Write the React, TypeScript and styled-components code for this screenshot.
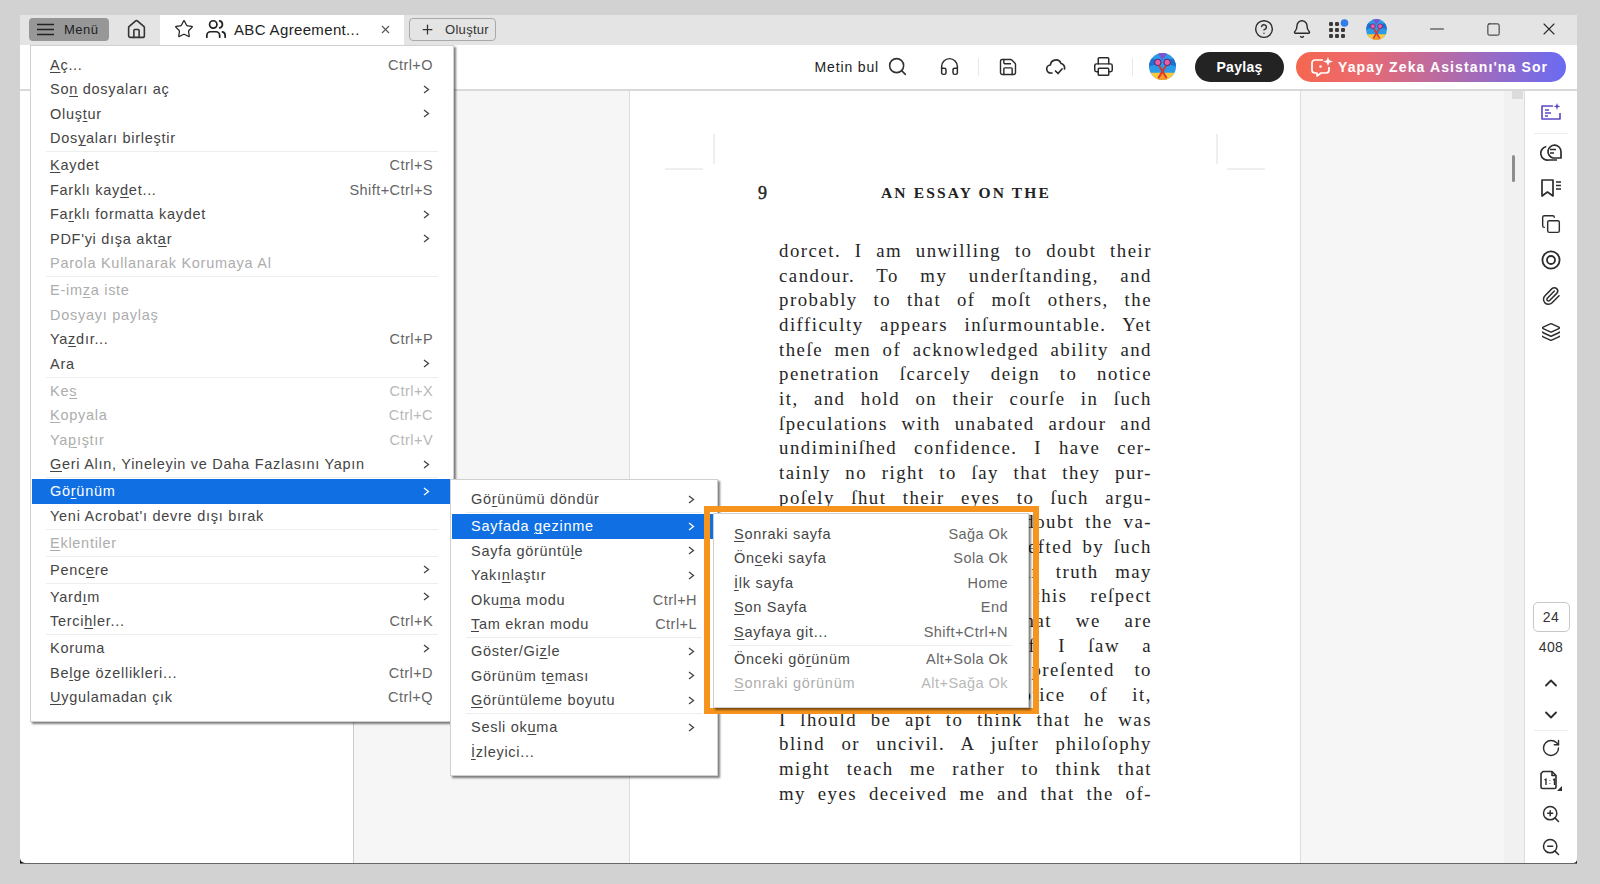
import React from "react";
import styled, { createGlobalStyle } from "styled-components";
import {
    Bell, ChevronDown, ChevronUp, CircleHelp, Copy, Headphones, House, Layers, Minus, Paperclip,
    Plus, Printer, RotateCw, Save, Search, Square, Star, Users, X, ZoomIn, ZoomOut,
} from "lucide-react";

const GlobalStyle = createGlobalStyle`
    html, body {
        margin: 0;
        padding: 0;
        height: 100%;
        background: #d2d2d2;
        overflow: hidden;
    }
    #root {
        height: 100%;
    }
`;

type MenuEntry = {
    label?: string,
    u?: number,
    hint?: string,
    sub?: boolean,
    off?: boolean,
    active?: boolean,
    separator?: boolean,
};

const SEP: MenuEntry = { separator: true };

const mainMenu: MenuEntry[] = [
    { label: "Aç...", u: 0, hint: "Ctrl+O" },
    { label: "Son dosyaları aç", u: 2, sub: true },
    { label: "Oluştur", u: 4, sub: true },
    { label: "Dosyaları birleştir", u: 3 },
    SEP,
    { label: "Kaydet", u: 0, hint: "Ctrl+S" },
    { label: "Farklı kaydet...", u: 10, hint: "Shift+Ctrl+S" },
    { label: "Farklı formatta kaydet", u: 2, sub: true },
    { label: "PDF'yi dışa aktar", u: 15, sub: true },
    { label: "Parola Kullanarak Korumaya Al", off: true },
    SEP,
    { label: "E-imza iste", u: 4, off: true },
    { label: "Dosyayı paylaş", off: true },
    { label: "Yazdır...", u: 2, hint: "Ctrl+P" },
    { label: "Ara", sub: true },
    SEP,
    { label: "Kes", u: 2, hint: "Ctrl+X", off: true },
    { label: "Kopyala", u: 0, hint: "Ctrl+C", off: true },
    { label: "Yapıştır", u: 2, hint: "Ctrl+V", off: true },
    { label: "Geri Alın, Yineleyin ve Daha Fazlasını Yapın", u: 0, sub: true },
    SEP,
    { label: "Görünüm", u: 2, sub: true, active: true },
    { label: "Yeni Acrobat'ı devre dışı bırak" },
    SEP,
    { label: "Eklentiler", u: 0, off: true },
    SEP,
    { label: "Pencere", u: 4, sub: true },
    SEP,
    { label: "Yardım", u: 4, sub: true },
    { label: "Tercihler...", u: 5, hint: "Ctrl+K" },
    SEP,
    { label: "Koruma", sub: true },
    { label: "Belge özellikleri...", u: 2, hint: "Ctrl+D" },
    { label: "Uygulamadan çık", u: 0, hint: "Ctrl+Q" },
];

const viewMenu: MenuEntry[] = [
    { label: "Görünümü döndür", u: 2, sub: true },
    SEP,
    { label: "Sayfada gezinme", u: 8, sub: true, active: true },
    { label: "Sayfa görüntüle", u: 13, sub: true },
    { label: "Yakınlaştır", u: 4, sub: true },
    { label: "Okuma modu", u: 3, hint: "Ctrl+H" },
    { label: "Tam ekran modu", u: 0, hint: "Ctrl+L" },
    SEP,
    { label: "Göster/Gizle", u: 9, sub: true },
    { label: "Görünüm teması", u: 9, sub: true },
    { label: "Görüntüleme boyutu", u: 0, sub: true },
    SEP,
    { label: "Sesli okuma", u: 8, sub: true },
    { label: "İzleyici...", u: 0 },
];

const navMenu: MenuEntry[] = [
    { label: "Sonraki sayfa", u: 0, hint: "Sağa Ok" },
    { label: "Önceki sayfa", u: 2, hint: "Sola Ok" },
    { label: "İlk sayfa", u: 0, hint: "Home" },
    { label: "Son Sayfa", u: 0, hint: "End" },
    { label: "Sayfaya git...", u: 0, hint: "Shift+Ctrl+N" },
    SEP,
    { label: "Önceki görünüm", u: 9, hint: "Alt+Sola Ok" },
    { label: "Sonraki görünüm", u: 0, hint: "Alt+Sağa Ok", off: true },
];

const bookLines = [
    "dorcet. I am unwilling to doubt their",
    "candour. To my underſtanding, and",
    "probably to that of moſt others, the",
    "difficulty appears inſurmountable. Yet",
    "theſe men of acknowledged ability and",
    "penetration ſcarcely deign to notice",
    "it, and hold on their courſe in ſuch",
    "ſpeculations with unabated ardour and",
    "undiminiſhed confidence. I have cer-",
    "tainly no right to ſay that they pur-",
    "poſely ſhut their eyes to ſuch argu-",
    "ments. I do not mean to doubt the va-",
    "lidity of thoſe who are affefted by ſuch",
    "reaſons, for I know their truth may",
    "appear different under this reſpect",
    "to us, and I own that we are",
    "often in the wrong. If I ſaw a",
    "man to whom it was preſented to",
    "view and took no notice of it,",
    "I ſhould be apt to think that he was",
    "blind or uncivil. A juſter philoſophy",
    "might teach me rather to think that",
    "my eyes deceived me and that the of-",
];

const Window = styled.div`
    position: absolute;
    left: 20px;
    top: 15px;
    width: 1557px;
    height: 849px;
    display: flex;
    flex-direction: column;
    font-family: "Liberation Sans", Arial, sans-serif;
    color: #333;
`;

const TabBar = styled.div`
    height: 30px;
    flex: none;
    display: flex;
    align-items: center;
    background: #e4e4e4;
    padding-left: 9px;
`;

const MenuButton = styled.div`
    width: 80px;
    height: 23px;
    margin-bottom: 2px;
    box-sizing: border-box;
    padding-left: 8px;
    display: flex;
    align-items: center;
    gap: 10px;
    background: #979797;
    border-radius: 4px;
    font-size: 13px;
    letter-spacing: 0.5px;
    color: #222;
`;

const HomeSlot = styled.div`
    width: 51px;
    height: 28px;
    margin-bottom: 2px;
    box-sizing: border-box;
    padding-left: 4px;
    display: flex;
    align-items: center;
    justify-content: center;
    color: #333;
`;

const Tab = styled.div`
    width: 244px;
    height: 30px;
    box-sizing: border-box;
    padding: 0 0 2px 14px;
    display: flex;
    align-items: center;
    background: #fff;
    font-size: 15px;
    letter-spacing: 0.35px;
    color: #222;
`;

const TabTitle = styled.span`
    margin-left: 7px;
    width: 145px;
    white-space: nowrap;
`;

const TabIcon = styled.span`
    display: flex;
    margin-left: 11px;
`;

const CreateButton = styled.div`
    margin: 0 0 2px 5px;
    width: 87px;
    height: 23px;
    box-sizing: border-box;
    padding-left: 10px;
    display: flex;
    align-items: center;
    gap: 10px;
    border: 1px solid #a9a9a9;
    border-radius: 4px;
    font-size: 13px;
    letter-spacing: 0.3px;
    color: #333;
`;

const WindowTools = styled.div`
    margin: 0 0 2px auto;
    display: flex;
    align-items: center;
`;

const ToolSlot = styled.div<{ $w: number, $ml?: number }>`
    width: ${p => p.$w}px;
    margin-left: ${p => p.$ml ?? 0}px;
    display: flex;
    align-items: center;
    justify-content: center;
    color: #2b2b2b;
`;

const Toolbar = styled.div`
    height: 43px;
    flex: none;
    display: flex;
    align-items: center;
    justify-content: flex-end;
    padding: 0 11px 1px 0;
    background: #fff;
    border-bottom: 2px solid #d9d9d9;
    box-sizing: content-box;
`;

const FindLabel = styled.span`
    font-size: 14px;
    color: #222;
    letter-spacing: 0.85px;
    margin-right: 8px;
`;

const BarDivider = styled.div`
    width: 1px;
    height: 18px;
    background: #e8e8e8;
`;

const ShareButton = styled.div`
    width: 89px;
    height: 30px;
    margin-left: 9px;
    display: flex;
    align-items: center;
    justify-content: center;
    border-radius: 16px;
    background: #232323;
    color: #fff;
    font-size: 14px;
    font-weight: 700;
    letter-spacing: 0.3px;
`;

const AskButton = styled.div`
    width: 270px;
    height: 30px;
    margin-left: 12px;
    box-sizing: border-box;
    padding-left: 14px;
    display: flex;
    align-items: center;
    gap: 4px;
    border-radius: 16px;
    background: linear-gradient(90deg, #f5674f 0%, #ea6a70 25%, #a56bb8 65%, #6a6bf2 100%);
    color: #fff;
    font-size: 14px;
    font-weight: 700;
    letter-spacing: 1.12px;
    white-space: nowrap;
`;

const Body = styled.div`
    flex: 1;
    min-height: 0;
    display: flex;
    background: #111;
    border-bottom: 1px solid #666;
`;

const LeftPanel = styled.div`
    width: 334px;
    flex: none;
    background: #fff;
    border-right: 1px solid #ccc;
    box-sizing: border-box;
    border-bottom-left-radius: 5px;
`;

const Workspace = styled.div`
    flex: 1;
    min-width: 0;
    background: #f6f6f6;
    padding-left: 275px;
    overflow: hidden;
`;

const Page = styled.div`
    position: relative;
    width: 672px;
    height: 100%;
    box-sizing: border-box;
    padding: 91px 148px 0 149px;
    background: #fff;
    border-left: 1px solid #ddd;
    border-right: 1px solid #ddd;
    font-family: "Liberation Serif", "Times New Roman", serif;
    color: #262626;
`;

const CropMarks = styled.svg`
    position: absolute;
    left: 0;
    top: 0;
    width: 670px;
    height: 90px;
`;

const PageHead = styled.div`
    position: relative;
    height: 22px;
    margin-left: -21px;
    display: flex;
    align-items: center;
    font-weight: 700;
    color: #222;
`;

const PageNumber = styled.span`
    font-size: 18px;
    font-weight: 400;
    -webkit-text-stroke: 0.4px #222;
    width: 123px;
`;

const PageTitle = styled.span`
    font-size: 15.5px;
    letter-spacing: 2.15px;
    white-space: nowrap;
`;

const PageText = styled.div`
    margin-top: 35px;
    font-size: 18.8px;
`;

const BookLine = styled.div`
    height: 24.68px;
    line-height: 24.68px;
    text-align: justify;
    text-align-last: justify;
    white-space: normal;
    letter-spacing: 1.5px;
    overflow: hidden;
`;

const ScrollStrip = styled.div`
    width: 21px;
    flex: none;
    background: #f1f1f1;
    border-right: 1px solid #dcdcdc;
    box-sizing: border-box;
    padding-left: 8px;
`;

const ScrollArrow = styled.div`
    height: 8px;
    margin-right: 1px;
    background: #dcdcdc;
`;

const ScrollThumb = styled.div`
    width: 3px;
    height: 27px;
    margin-top: 56px;
    background: #8d8d8d;
    border-radius: 2px;
`;

const Rail = styled.div`
    width: 52px;
    flex: none;
    display: flex;
    flex-direction: column;
    align-items: center;
    background: #fff;
    border-bottom-right-radius: 4px;
    color: #2d2d2d;
`;

const RailSlot = styled.div<{ $h?: number }>`
    width: 100%;
    height: ${p => p.$h ?? 36}px;
    flex: none;
    display: flex;
    align-items: center;
    justify-content: center;
`;

const RailRule = styled.div`
    width: 34px;
    height: 1px;
    flex: none;
    background: #eee;
`;

const PageBox = styled.div`
    margin-top: auto;
    width: 37px;
    height: 30px;
    flex: none;
    box-sizing: border-box;
    border: 1px solid #c8c8c8;
    border-radius: 5px;
    display: flex;
    align-items: center;
    justify-content: center;
    font-size: 14px;
    letter-spacing: 0.4px;
    color: #333;
`;

const PageTotal = styled.div`
    height: 30px;
    flex: none;
    margin-bottom: 5px;
    display: flex;
    align-items: center;
    font-size: 14px;
    letter-spacing: 0.4px;
    color: #333;
`;

const Popup = styled.div<{ $x: number, $y: number, $w: number, $pad: number, $bottom: number, $inset: number, $right: number, $arrow: number }>`
    position: absolute;
    left: ${p => p.$x}px;
    top: ${p => p.$y}px;
    width: ${p => p.$w}px;
    box-sizing: border-box;
    padding: ${p => p.$pad}px 1px ${p => p.$bottom}px;
    background: #fff;
    border: 1px solid #d0d0d0;
    box-shadow: 2px 2px 2px rgba(0, 0, 0, 0.5);
    font-family: "Liberation Sans", Arial, sans-serif;
    font-size: 14.5px;
    letter-spacing: 0.72px;
    --inset: ${p => p.$inset}px;
    --right: ${p => p.$right}px;
    --arrow: ${p => p.$arrow}px;
`;

const Row = styled.div<{ $off?: boolean, $active?: boolean }>`
    height: 24.5px;
    box-sizing: border-box;
    padding-left: var(--inset);
    padding-right: var(--right);
    display: flex;
    align-items: center;
    justify-content: space-between;
    white-space: nowrap;
    color: ${p => (p.$active ? "#fff" : p.$off ? "#adadad" : "#444")};
    background: ${p => (p.$active ? "#0f6fe3" : "transparent")};
    u {
        text-underline-offset: 2px;
        text-decoration-thickness: 1px;
    }
`;

const Hint = styled.span<{ $off?: boolean }>`
    color: ${p => (p.$off ? "#b8b8b8" : "#666")};
    letter-spacing: 0.45px;
`;

const Arrow = styled.svg`
    margin-right: var(--arrow);
    flex: none;
`;

const Rule = styled.div`
    height: 1px;
    margin: 0.75px 14px;
    background: #eee;
`;

const Highlight = styled.div`
    position: absolute;
    left: 704px;
    top: 506px;
    width: 335px;
    height: 208px;
    box-sizing: border-box;
    border: 6px solid #f7941d;
`;

function Label({ text, u }: { text: string, u?: number }) {
    if (u === undefined) return <span>{text}</span>;
    return (
        <span>
            {text.slice(0, u)}<u>{text[u]}</u>{text.slice(u + 1)}
        </span>
    );
}

function MenuList({ items }: { items: MenuEntry[] }) {
    return (
        <>
            {items.map((item, i) => {
                if (item.separator) return <Rule key={i} />;
                return (
                    <Row key={i} $off={item.off} $active={item.active}>
                        <Label text={item.label!} u={item.u} />
                        {item.hint && <Hint $off={item.off}>{item.hint}</Hint>}
                        {item.sub && (
                            <Arrow width="7" height="9" viewBox="0 0 7 9" fill="none" stroke="currentColor" strokeWidth="1.3">
                                <path d="M1 1l4.5 3.5L1 8" />
                            </Arrow>
                        )}
                    </Row>
                );
            })}
        </>
    );
}

function Avatar({ size }: { size: number }) {
    return (
        <svg width={size} height={size} viewBox="0 0 26 26">
            <defs>
                <clipPath id={`av${size}`}><circle cx="13" cy="13" r="13" /></clipPath>
            </defs>
            <g clipPath={`url(#av${size})`}>
                <rect width="26" height="26" fill="#2a9be8" />
                <path d="M13 9L0 4v9zM13 9l13-5v9z" fill="#1f6fd0" />
                <path d="M8 0h10l-5 7z" fill="#7a55d0" />
                <path d="M0 19h26v7H0z" fill="#f9c83c" />
                <path d="M7 26l6-8 6 8z" fill="#f29a2e" />
            </g>
            <circle cx="8.500" cy="9" r="3" fill="#ec5f9f" stroke="#5a2a80" strokeWidth="1" />
            <circle cx="17.500" cy="9" r="3" fill="#ec5f9f" stroke="#5a2a80" strokeWidth="1" />
            <path d="M9.500 12L17 24M16.500 12L9 24" stroke="#e0322c" strokeWidth="1.800" />
        </svg>
    );
}

function AppsIcon() {
    const dots = [];
    for (let row = 0; row < 3; row++) {
        for (let col = 0; col < 3; col++) {
            if (row === 0 && col === 2) continue;
            dots.push(<rect key={`${row}${col}`} x={col * 6} y={row * 6 + 3} width="4" height="4" rx="1.200" fill="#3a3a3a" />);
        }
    }
    return (
        <svg width="20" height="20" viewBox="0 0 20 20">
            {dots}
            <circle cx="15.500" cy="4" r="3.800" fill="#2f7de8" />
        </svg>
    );
}

function CloudIcon() {
    return (
        <svg width="22" height="20" viewBox="0 0 22 20" fill="none" stroke="#2b2b2b" strokeWidth="1.7" strokeLinecap="round" strokeLinejoin="round">
            <path d="M7 16H6a4 4 0 0 1-.6-8A5.500 5.500 0 0 1 16 6.500a4.500 4.500 0 0 1 3.500 5.500" />
            <path d="M10.500 14l2.500 2.500 4-4.500" />
        </svg>
    );
}

function AskIcon() {
    return (
        <svg width="24" height="22" viewBox="0 0 24 22" fill="none" stroke="#fff" strokeWidth="1.7" strokeLinejoin="round">
            <path d="M13 4H5a3 3 0 0 0-3 3v7a3 3 0 0 0 3 3h2v3l4-3h5a3 3 0 0 0 3-3v-3" />
            <circle cx="10.500" cy="10.500" r="1.200" fill="#fff" stroke="none" />
            <path d="M18 1l1.200 3.300L23 5.500l-3.600 1.300L18 10l-1.300-3.200L13 5.500l3.700-1.200z" fill="#fff" stroke="none" />
        </svg>
    );
}

function AgreementIcon() {
    return (
        <svg width="22" height="20" viewBox="0 0 22 20" fill="none" stroke="#5a48c8" strokeWidth="1.6" strokeLinejoin="round">
            <path d="M13 4H2v13h18v-6" />
            <path d="M5 8h4M5 11h6M5 14h3" />
            <path d="M17 1l.9 2.400 2.600.9-2.600 1L17 8l-.9-2.700-2.600-1 2.600-.9z" fill="#5a48c8" stroke="none" />
        </svg>
    );
}

function CommentsIcon() {
    return (
        <svg width="22" height="20" viewBox="0 0 22 20" fill="none" stroke="#2d2d2d" strokeWidth="1.7" strokeLinejoin="round">
            <path d="M21 16h-8a6.500 6.500 0 1 1 8-6.300z" />
            <path d="M10 7.500h6M10 11h4" />
            <path d="M6.300 4.500A6.500 6.500 0 0 0 9 18h8" />
        </svg>
    );
}

function BookmarksIcon() {
    return (
        <svg width="22" height="20" viewBox="0 0 22 20" fill="none" stroke="#2d2d2d" strokeWidth="1.7" strokeLinejoin="round">
            <path d="M2 2h11v16l-5.500-4L2 18z" />
            <path d="M16 4h5M16 7.500h5M16 11h5" strokeWidth="1.400" />
        </svg>
    );
}

function TargetIcon() {
    return (
        <svg width="20" height="20" viewBox="0 0 20 20" fill="none" stroke="#2d2d2d" strokeWidth="1.8">
            <circle cx="10" cy="10" r="8.600" />
            <circle cx="10" cy="10" r="4" />
        </svg>
    );
}

function ActualSizeIcon() {
    return (
        <svg width="24" height="22" viewBox="0 0 24 22" fill="none" stroke="#2d2d2d" strokeWidth="1.6" strokeLinejoin="round">
            <path d="M4 1.500h9l4 4V17a1.500 1.500 0 0 1-1.500 1.500h-12A1.500 1.500 0 0 1 2 17V3.500z" />
            <path d="M13 1.500v4h4" />
            <path d="M5.500 10l1.500-1v6M14 10l1.500-1v6M10.800 10.500v.6M10.800 13.500v.6" strokeWidth="1.400" />
            <path d="M23 16v5h-5z" fill="#2d2d2d" stroke="none" />
        </svg>
    );
}

export default function App() {
    return (
        <>
            <GlobalStyle />
            <Window>
                <TabBar>
                    <MenuButton>
                        <svg width="17" height="13" viewBox="0 0 17 13" stroke="#222" strokeWidth="1.6">
                            <path d="M0 1.500h17M0 6.500h17M0 11.500h17" />
                        </svg>
                        Menü
                    </MenuButton>
                    <HomeSlot><House size={21} strokeWidth={1.8} /></HomeSlot>
                    <Tab>
                        <Star size={20} strokeWidth={1.5} />
                        <TabIcon><Users size={22} strokeWidth={1.9} /></TabIcon>
                        <TabTitle>ABC Agreement...</TabTitle>
                        <X size={13} strokeWidth={2} color="#555" />
                    </Tab>
                    <CreateButton>
                        <Plus size={15} strokeWidth={2} />
                        Oluştur
                    </CreateButton>
                    <WindowTools>
                        <ToolSlot $w={38}><CircleHelp size={20} strokeWidth={1.7} /></ToolSlot>
                        <ToolSlot $w={37}><Bell size={20} strokeWidth={1.7} /></ToolSlot>
                        <ToolSlot $w={38}><AppsIcon /></ToolSlot>
                        <ToolSlot $w={37}><Avatar size={21} /></ToolSlot>
                        <ToolSlot $w={56} $ml={14}><Minus size={22} strokeWidth={1.3} /></ToolSlot>
                        <ToolSlot $w={56}><Square size={15} strokeWidth={1.6} /></ToolSlot>
                        <ToolSlot $w={56}><X size={20} strokeWidth={1.3} /></ToolSlot>
                    </WindowTools>
                </TabBar>
                <Toolbar>
                    <FindLabel>Metin bul</FindLabel>
                    <Search size={21} strokeWidth={1.8} />
                    <ToolSlot $w={58} $ml={12}><Headphones size={21} strokeWidth={1.7} /></ToolSlot>
                    <BarDivider />
                    <ToolSlot $w={58}><Save size={20} strokeWidth={1.7} /></ToolSlot>
                    <ToolSlot $w={37}><CloudIcon /></ToolSlot>
                    <ToolSlot $w={58}><Printer size={21} strokeWidth={1.7} /></ToolSlot>
                    <BarDivider />
                    <ToolSlot $w={48} $ml={5}><Avatar size={27} /></ToolSlot>
                    <ShareButton>Paylaş</ShareButton>
                    <AskButton>
                        <AskIcon />
                        Yapay Zeka Asistanı'na Sor
                    </AskButton>
                </Toolbar>
                <Body>
                    <LeftPanel />
                    <Workspace>
                        <Page>
                            <CropMarks viewBox="0 0 670 90" stroke="#dedede" strokeWidth="1">
                                <path d="M84 43v30M587 43v30M35 78h38M597 78h38" />
                            </CropMarks>
                            <PageHead>
                                <PageNumber>9</PageNumber>
                                <PageTitle>AN ESSAY ON THE</PageTitle>
                            </PageHead>
                            <PageText>
                                {bookLines.map((line, i) => <BookLine key={i}>{line}</BookLine>)}
                            </PageText>
                        </Page>
                    </Workspace>
                    <ScrollStrip>
                        <ScrollArrow />
                        <ScrollThumb />
                    </ScrollStrip>
                    <Rail>
                        <RailSlot $h={42}><AgreementIcon /></RailSlot>
                        <RailRule />
                        <RailSlot><CommentsIcon /></RailSlot>
                        <RailSlot><BookmarksIcon /></RailSlot>
                        <RailSlot><Copy size={20} strokeWidth={1.7} /></RailSlot>
                        <RailSlot><TargetIcon /></RailSlot>
                        <RailSlot><Paperclip size={20} strokeWidth={1.8} /></RailSlot>
                        <RailSlot><Layers size={20} strokeWidth={1.8} /></RailSlot>
                        <PageBox>24</PageBox>
                        <PageTotal>408</PageTotal>
                        <RailSlot $h={32}><ChevronUp size={20} strokeWidth={2.2} /></RailSlot>
                        <RailSlot $h={31}><ChevronDown size={20} strokeWidth={2.2} /></RailSlot>
                        <RailRule />
                        <RailSlot $h={33}><RotateCw size={20} strokeWidth={1.7} /></RailSlot>
                        <RailSlot $h={33}><ActualSizeIcon /></RailSlot>
                        <RailSlot $h={33}><ZoomIn size={20} strokeWidth={1.8} /></RailSlot>
                        <RailSlot $h={33}><ZoomOut size={20} strokeWidth={1.8} /></RailSlot>
                    </Rail>
                </Body>
            </Window>
            <Popup $x={30} $y={45} $w={424} $pad={6.5} $bottom={11.5} $inset={18} $right={19} $arrow={3}>
                <MenuList items={mainMenu} />
            </Popup>
            <Popup $x={450} $y={479} $w={268} $pad={7} $bottom={11} $inset={19} $right={19} $arrow={2}>
                <MenuList items={viewMenu} />
            </Popup>
            <Highlight />
            <Popup $x={713} $y={513} $w={316} $pad={7.5} $bottom={11.5} $inset={19} $right={19} $arrow={0}>
                <MenuList items={navMenu} />
            </Popup>
        </>
    );
}
